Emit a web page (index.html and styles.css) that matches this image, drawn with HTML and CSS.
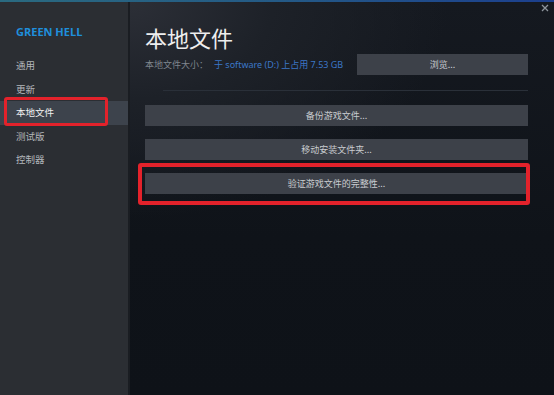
FILE: index.html
```html
<!DOCTYPE html>
<html lang="zh">
<head>
<meta charset="utf-8">
<title>本地文件</title>
<link rel="stylesheet" href="styles.css">
</head>
<body>
<div class="topline"></div>
<div class="window">
  <nav class="sidebar">
    <div class="game">GREEN HELL</div>
    <div class="item">通用</div>
    <div class="item">更新</div>
    <div class="item selected">本地文件</div>
    <div class="item">测试版</div>
    <div class="item">控制器</div>
  </nav>
  <main class="main">
    <h1 class="title">本地文件</h1>
    <div class="sizerow">
      <span class="label">本地文件大小：</span>
      <span class="value">于 software (D:) 上占用 7.53 GB</span>
      <button class="btn browse">浏览...</button>
    </div>
    <div class="sep"></div>
    <div class="actions">
      <button class="btn">备份游戏文件...</button>
      <button class="btn">移动安装文件夹...</button>
      <button class="btn">验证游戏文件的完整性...</button>
    </div>
  </main>
</div>
<svg class="close" width="8" height="8" viewBox="0 0 8 8"><path d="M1 1L7 7M7 1L1 7" stroke="#8d949c" stroke-width="1.3" fill="none"/></svg>
<div class="mark mark-nav"></div>
<div class="mark mark-verify"></div>
</body>
</html>
```

FILE: styles.css
```css
html, body {
  margin: 0;
  padding: 0;
}
body {
  width: 554px;
  height: 395px;
  overflow: hidden;
  position: relative;
  background: #0f1319;
  font-family: "Noto Sans", "Noto Sans CJK SC", sans-serif;
}
.topline {
  height: 2px;
  background: linear-gradient(90deg, #2a6a80 0%, #245a86 50%, #1c3f8e 100%);
}
.window {
  display: flex;
  height: 393px;
}
.sidebar {
  width: 128px;
  flex: none;
  background: #2b2e33;
  padding-top: 23px;
  box-sizing: border-box;
}
.game {
  font-family: "Open Sans", "Noto Sans", sans-serif;
  font-weight: 700;
  font-size: 11px;
  line-height: 14px;
  color: #1f8fdc;
  padding-left: 16px;
  margin-bottom: 15px;
}
.item {
  height: 23.5px;
  line-height: 23.5px;
  padding-left: 16px;
  font-size: 9.5px;
  color: #b3b7bb;
}
.item.selected {
  background: #3d434c;
  color: #f2f2f2;
}
.main {
  flex: 1;
  border-left: 2px solid #1a1d22;
  padding: 20px 26px 0 15px;
  background:
    radial-gradient(ellipse 75% 55% at 0% 0%, #2c2f37 0%, #1d2128 45%, rgba(15,19,25,0) 100%),
    linear-gradient(180deg, #151920 0%, #0f1319 60%, #0e1218 100%);
}
.title {
  margin: 0;
  font-weight: 400;
  font-size: 22px;
  line-height: 30px;
  color: #eeeeee;
  font-family: "Noto Sans CJK SC", sans-serif;
}
.sizerow {
  display: flex;
  align-items: center;
  margin-top: 2px;
  height: 21px;
  font-size: 9px;
}
.label {
  color: #7f868e;
}
.value {
  color: #3b77c8;
  margin-left: 6px;
}
.btn {
  display: block;
  border: none;
  padding: 0;
  margin: 0;
  height: 21px;
  background: #3d4149;
  color: #c9ccd0;
  font-family: "Noto Sans CJK SC", sans-serif;
  font-size: 9px;
  text-align: center;
}
.browse {
  margin-left: auto;
  width: 171px;
}
.sep {
  height: 1px;
  background: #2a3039;
  margin: 15px 0 0 18px;
}
.actions {
  display: flex;
  flex-direction: column;
  gap: 13px;
  margin-top: 14px;
}
.actions .btn {
  width: 100%;
}
.close {
  position: absolute;
  left: 541px;
  top: 4px;
}
.mark {
  position: absolute;
  border: 3.5px solid #e3222b;
  border-radius: 3px;
  box-sizing: border-box;
}
.mark-nav {
  left: 4px;
  top: 97px;
  width: 104px;
  height: 29px;
}
.mark-verify {
  left: 138px;
  top: 163px;
  width: 392px;
  height: 42px;
  border-width: 4px;
}
```
